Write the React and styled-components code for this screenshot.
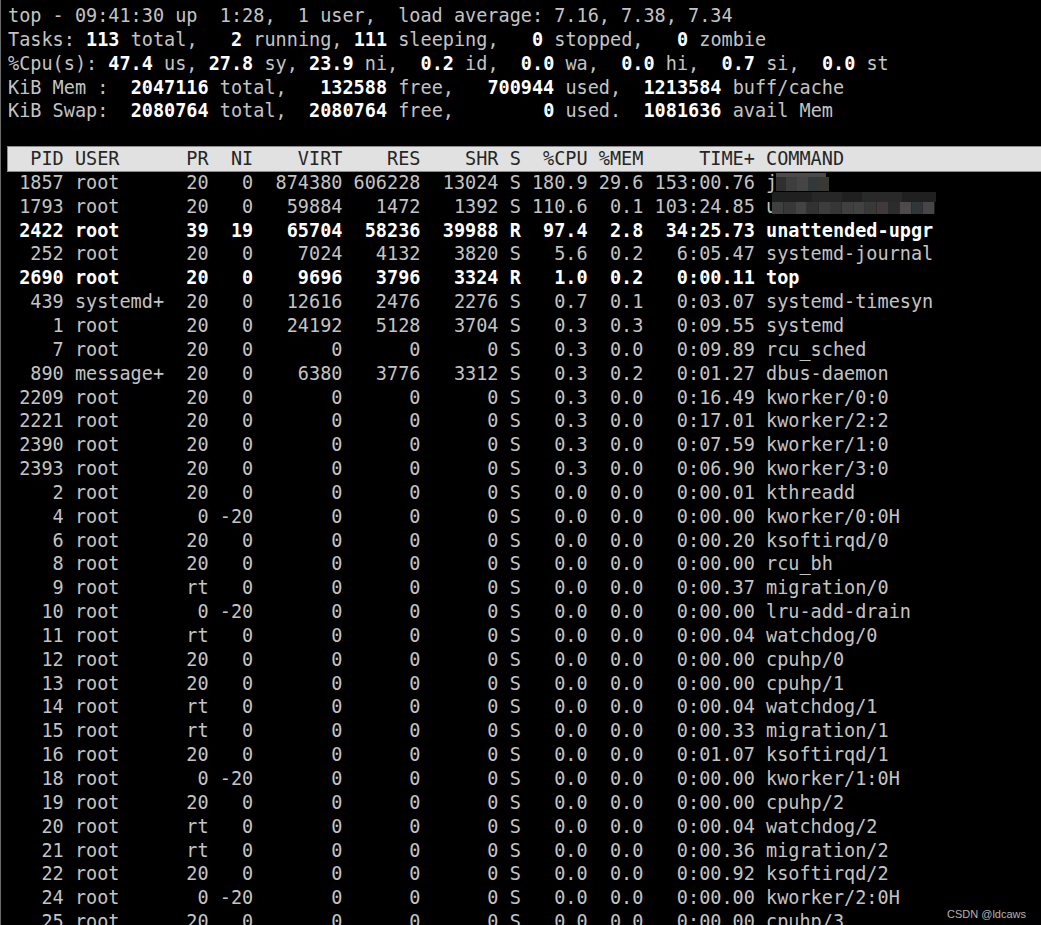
import React from 'react';
import styled, { createGlobalStyle } from 'styled-components';

const GlobalStyle = createGlobalStyle`
  html, body {
    margin: 0;
    padding: 0;
    background: #000;
  }
  body {
    width: 1041px;
    height: 925px;
    overflow: hidden;
  }
`;

const Terminal = styled.main`
  position: relative;
  box-sizing: border-box;
  width: 1041px;
  height: 925px;
  overflow: hidden;
  background: #000;
  border-left: 1px solid #6b6b6b;
  padding: 4px 0 0 7px;
  font-family: 'DejaVu Sans Mono', 'Liberation Mono', monospace;
  font-size: 18.52px;
  line-height: 23.85px;
  color: #c4c4c4;
`;

const Line = styled.div`
  white-space: pre;
  height: 23.85px;
  font-weight: ${({ $bold }) => ($bold ? 700 : 400)};
  color: ${({ $bold }) => ($bold ? '#ffffff' : '#c4c4c4')};
`;

const Strong = styled.b`
  color: #ffffff;
  font-weight: 700;
`;

const HeaderBar = styled.div`
  white-space: pre;
  height: 23.85px;
  background: #e1e1e1;
  color: #262626;
  box-shadow: 0 0 0 1px #8c8c8c;
`;

const Blur = styled.svg`
  display: inline-block;
  vertical-align: top;
  margin-top: ${({ $top }) => $top}px;
  margin-left: ${({ $left }) => $left}px;
`;

const Watermark = styled.div`
  position: absolute;
  top: 903px;
  right: 15px;
  font-family: 'Liberation Sans', Arial, sans-serif;
  font-size: 11px;
  color: #b4b4b4;
`;

const summary = [
  'top - 09:41:30 up  1:28,  1 user,  load average: 7.16, 7.38, 7.34',
  'Tasks: {113} total,   {2} running, {111} sleeping,   {0} stopped,   {0} zombie',
  '%Cpu(s): {47.4} us, {27.8} sy, {23.9} ni,  {0.2} id,  {0.0} wa,  {0.0} hi,  {0.7} si,  {0.0} st',
  'KiB Mem :  {2047116} total,   {132588} free,   {700944} used,  {1213584} buff/cache',
  'KiB Swap:  {2080764} total,  {2080764} free,        {0} used.  {1081636} avail Mem',
];

const header = '  PID USER      PR  NI    VIRT    RES    SHR S  %CPU %MEM     TIME+ COMMAND';

const K = '0 0 0 S 0.0 0.0';

const processes = [
  '1857 root 20 0 874380 606228 13024 S 180.9 29.6 153:00.76 j',
  '1793 root 20 0 59884 1472 1392 S 110.6 0.1 103:24.85 u',
  '!2422 root 39 19 65704 58236 39988 R 97.4 2.8 34:25.73 unattended-upgr',
  '252 root 20 0 7024 4132 3820 S 5.6 0.2 6:05.47 systemd-journal',
  '!2690 root 20 0 9696 3796 3324 R 1.0 0.2 0:00.11 top',
  '439 systemd+ 20 0 12616 2476 2276 S 0.7 0.1 0:03.07 systemd-timesyn',
  '1 root 20 0 24192 5128 3704 S 0.3 0.3 0:09.55 systemd',
  '7 root 20 0 0 0 0 S 0.3 0.0 0:09.89 rcu_sched',
  '890 message+ 20 0 6380 3776 3312 S 0.3 0.2 0:01.27 dbus-daemon',
  '2209 root 20 0 0 0 0 S 0.3 0.0 0:16.49 kworker/0:0',
  '2221 root 20 0 0 0 0 S 0.3 0.0 0:17.01 kworker/2:2',
  '2390 root 20 0 0 0 0 S 0.3 0.0 0:07.59 kworker/1:0',
  '2393 root 20 0 0 0 0 S 0.3 0.0 0:06.90 kworker/3:0',
  `2 root 20 0 ${K} 0:00.01 kthreadd`,
  `4 root 0 -20 ${K} 0:00.00 kworker/0:0H`,
  `6 root 20 0 ${K} 0:00.20 ksoftirqd/0`,
  `8 root 20 0 ${K} 0:00.00 rcu_bh`,
  `9 root rt 0 ${K} 0:00.37 migration/0`,
  `10 root 0 -20 ${K} 0:00.00 lru-add-drain`,
  `11 root rt 0 ${K} 0:00.04 watchdog/0`,
  `12 root 20 0 ${K} 0:00.00 cpuhp/0`,
  `13 root 20 0 ${K} 0:00.00 cpuhp/1`,
  `14 root rt 0 ${K} 0:00.04 watchdog/1`,
  `15 root rt 0 ${K} 0:00.33 migration/1`,
  `16 root 20 0 ${K} 0:01.07 ksoftirqd/1`,
  `18 root 0 -20 ${K} 0:00.00 kworker/1:0H`,
  `19 root 20 0 ${K} 0:00.00 cpuhp/2`,
  `20 root rt 0 ${K} 0:00.04 watchdog/2`,
  `21 root rt 0 ${K} 0:00.36 migration/2`,
  `22 root 20 0 ${K} 0:00.92 ksoftirqd/2`,
  `24 root 0 -20 ${K} 0:00.00 kworker/2:0H`,
  `25 root 20 0 ${K} 0:00.00 cpuhp/3`,
];

// pixelated (censored) command names
const blurShort = {
  width: 54,
  height: 18,
  top: 2,
  left: -1,
  cells: [
    [0, 0, 50, 4, '#4a4a4a'],
    [0, 4, 10, 14, '#2f2f2f'],
    [10, 4, 11, 14, '#3e3e3e'],
    [21, 4, 11, 14, '#454545'],
    [32, 4, 11, 14, '#333838'],
    [43, 4, 10, 14, '#3a3833'],
  ],
};

const longColors = [
  '#3f3f3f', '#383838', '#434343', '#323232', '#3d3d3d', '#363636', '#404040',
  '#424242', '#393939', '#423a3a', '#2c2c2c', '#4e4a4a', '#313638', '#484545',
];

const blurLong = {
  width: 164,
  height: 22,
  top: -3,
  left: -5,
  cells: [
    [0, 0, 164, 10, '#202020'],
    [40, 0, 30, 10, '#272727'],
    [90, 0, 40, 10, '#292929'],
    ...longColors.map((c, i) => [i * 11.6, 10, 11.6, 12, c]),
  ],
};

function Mosaic({ spec }) {
  return (
    <Blur
      width={spec.width}
      height={spec.height}
      viewBox={`0 0 ${spec.width} ${spec.height}`}
      $top={spec.top}
      $left={spec.left}
    >
      {spec.cells.map(([x, y, w, h, c], i) => (
        <rect key={i} x={x} y={y} width={w} height={h} fill={c} />
      ))}
    </Blur>
  );
}

function SummaryLine({ text }) {
  const parts = text.split(/\{([^}]*)\}/);
  return (
    <Line>
      {parts.map((p, i) => (i % 2 ? <Strong key={i}>{p}</Strong> : p))}
    </Line>
  );
}

function formatRow(line) {
  const bold = line.startsWith('!');
  const [pid, user, pr, ni, virt, res, shr, s, cpu, mem, time, cmd] = (bold ? line.slice(1) : line).split(/\s+/);
  const text =
    pid.padStart(5) + ' ' + user.padEnd(8) + ' ' + pr.padStart(3) + ' ' + ni.padStart(3) + ' ' +
    virt.padStart(7) + ' ' + res.padStart(6) + ' ' + shr.padStart(6) + ' ' + s + ' ' +
    cpu.padStart(5) + ' ' + mem.padStart(4) + ' ' + time.padStart(9) + ' ' + cmd;
  return { bold, text, pid };
}

export default function App() {
  return (
    <Terminal>
      <GlobalStyle />
      {summary.map((t, i) => (
        <SummaryLine key={i} text={t} />
      ))}
      <Line> </Line>
      <HeaderBar>{header}</HeaderBar>
      {processes.map((p) => {
        const row = formatRow(p);
        return (
          <Line key={row.pid} $bold={row.bold}>
            {row.text}
            {row.pid === '1857' && <Mosaic spec={blurShort} />}
            {row.pid === '1793' && <Mosaic spec={blurLong} />}
          </Line>
        );
      })}
      <Watermark>CSDN @ldcaws</Watermark>
    </Terminal>
  );
}
